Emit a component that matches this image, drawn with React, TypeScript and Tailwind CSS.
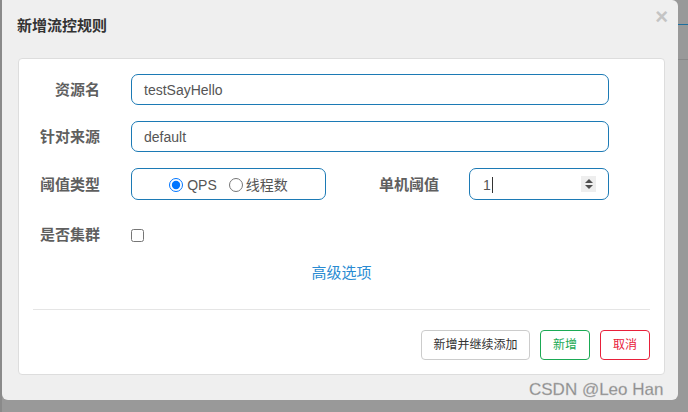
import React from "react";

const font = { fontFamily: '"Liberation Sans", "Noto Sans CJK SC", sans-serif' };

const Label = ({ children, className = "" }: { children: React.ReactNode; className?: string }) => (
  <div className={`w-[81px] shrink-0 pt-[2px] text-right text-[15px] font-bold text-[#5f5f5f] ${className}`}>{children}</div>
);

const App = () => {
  return (
    <div style={font} className="relative flex h-[412px] w-[688px] overflow-hidden bg-[#999]">
      {/* backdrop edge */}
      <div className="w-[2px] shrink-0 bg-[#8a8a8a]" />

      {/* modal */}
      <div className="flex h-[400px] w-[676px] shrink-0 flex-col rounded-tr-md rounded-b-md bg-[#efefef]">
        <div className="flex h-[58px] items-start justify-between pl-[15px] pr-[10px]">
          <h4 className="mt-[15px] text-[15px] font-bold text-[#333]">新增流控规则</h4>
          <span className="mt-[4px] text-[22px] font-bold leading-[26px] text-[#c4c4c4]">×</span>
        </div>

        <div className="ml-[16px] flex h-[317px] w-[647px] flex-col rounded-[4px] border border-[#ddd] bg-white">
          {/* 资源名 */}
          <div className="mt-[15px] flex h-[31px] items-center">
            <Label>资源名</Label>
            <div className="ml-[31px] flex h-[31px] w-[478px] items-center rounded-[7px] border border-[#1c7ab5] pl-[12px] pt-[2px] text-[14px] text-[#555]">
              testSayHello
            </div>
          </div>

          {/* 针对来源 */}
          <div className="mt-[16px] flex h-[31px] items-center">
            <Label>针对来源</Label>
            <div className="ml-[31px] flex h-[31px] w-[478px] items-center rounded-[7px] border border-[#1c7ab5] pl-[12px] pt-[2px] text-[14px] text-[#555]">
              default
            </div>
          </div>

          {/* 阈值类型 / 单机阈值 */}
          <div className="mt-[16px] flex h-[32px] items-center">
            <Label>阈值类型</Label>
            <div className="ml-[31px] flex h-[32px] w-[195px] items-center justify-center rounded-[7px] border border-[#1c7ab5] pt-[2px] text-[14px] text-[#555]">
              <label className="flex items-center">
                <input type="radio" name="grade" defaultChecked className="m-0 h-[14px] w-[14px]" />
                <span className="ml-[4px]">QPS</span>
              </label>
              <label className="ml-[12px] flex items-center">
                <input type="radio" name="grade" className="m-0 h-[14px] w-[14px]" />
                <span className="ml-[3px]">线程数</span>
              </label>
            </div>
            <div className="w-[113px] pt-[2px] text-right text-[15px] font-bold text-[#5f5f5f]">单机阈值</div>
            <div className="ml-[30px] flex h-[32px] w-[140px] items-center justify-between rounded-[7px] border border-[#1c7ab5] pl-[13px] pr-[12px] text-[14px] text-[#555]">
              <span className="flex items-center pt-[2px]">
                1<span className="ml-[1px] h-[16px] w-px bg-[#333]" />
              </span>
              <div className="flex h-[16px] w-[15px] flex-col items-center justify-center gap-[2px] bg-[#eee]">
                <svg width="8" height="4" viewBox="0 0 8 4"><path d="M0 4 L4 0 L8 4 Z" fill="#505050" /></svg>
                <svg width="8" height="4" viewBox="0 0 8 4"><path d="M0 0 L4 4 L8 0 Z" fill="#505050" /></svg>
              </div>
            </div>
          </div>

          {/* 是否集群 */}
          <div className="mt-[16px] flex h-[36px] items-center">
            <Label>是否集群</Label>
            <input type="checkbox" className="m-0 ml-[31px] mt-[2px] h-[13px] w-[13px]" />
          </div>

          <div className="mt-[10px] flex h-[20px] items-center justify-center pt-[2px]">
            <a className="text-[15px] text-[#2a8bd2]">高级选项</a>
          </div>

          <div className="mx-[14px] mt-[27px] h-px bg-[#e5e5e5]" />

          <div className="mt-[20px] flex justify-end gap-[10px] pr-[14px] text-[12px]">
            <button className="flex h-[30px] w-[109px] items-center justify-center rounded-[4px] border border-[#ccc] bg-white text-[#333]">
              新增并继续添加
            </button>
            <button className="flex h-[30px] w-[50px] items-center justify-center rounded-[4px] border border-[#1aaa55] bg-white text-[#1aaa55]">
              新增
            </button>
            <button className="flex h-[30px] w-[50px] items-center justify-center rounded-[4px] border border-[#e8203a] bg-white text-[#e8203a]">
              取消
            </button>
          </div>
        </div>
      </div>

      {/* backdrop right edge */}
      <div className="flex w-[10px] shrink-0 flex-col">
        <div className="mt-[24px] h-px bg-[#1c6f9f]" />
        <div className="mt-[34px] h-px bg-[#888]" />
      </div>

      {/* watermark */}
      <div className="pointer-events-none absolute left-[529px] top-[377px] text-[17px] text-[#8c8c8c]" style={{ ...font, WebkitTextStroke: "0.3px #bbb" }}>
        CSDN @Leo Han
      </div>
    </div>
  );
};

export default App;
